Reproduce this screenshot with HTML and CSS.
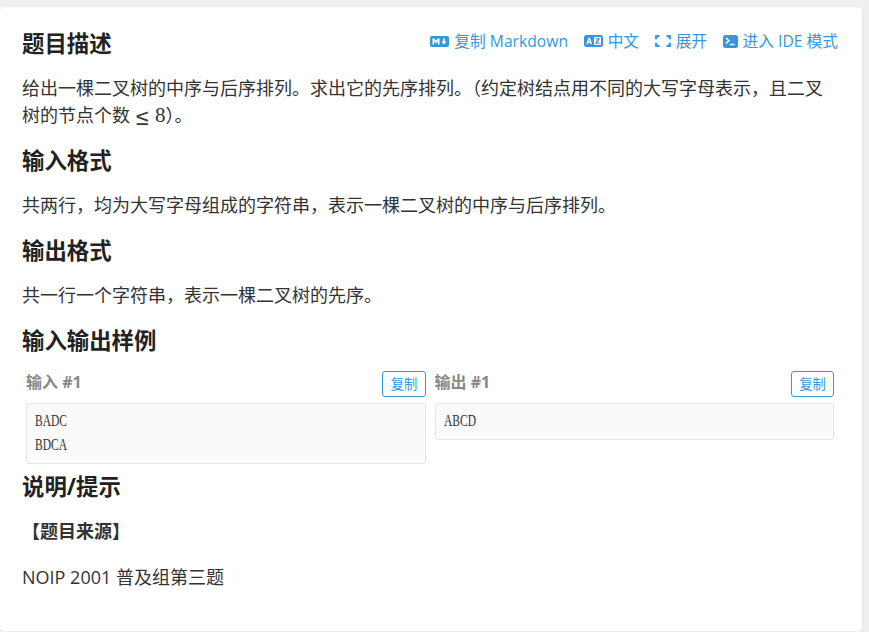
FILE: index.html
```html
<!DOCTYPE html>
<html lang="zh-CN">
<head>
  <meta charset="UTF-8" />
  <title>题目描述</title>
  <link rel="stylesheet" href="styles.css">
</head>
<body>

  <div class="card">
    <div class="card-head">
      <h2>题目描述</h2>
      <div class="tools">
        <a class="tool">
          <svg width="19" height="11" viewBox="0 0 19 11"><rect width="19" height="11" rx="2" fill="#3498db"/><path d="M2.500 8.500v-6h1.800L6 4.800l1.700-2.300h1.800v6H7.800V5.200L6 7.400 4.200 5.200v3.300z" fill="#fff"/><path d="M13 2.500h1.800v3H16.500l-2.600 3-2.600-3H13z" fill="#fff"/></svg>
          复制 Markdown
        </a>
        <a class="tool">
          <svg width="19" height="12" viewBox="0 0 19 12"><rect width="19" height="12" rx="2.500" fill="#3498db"/><path d="M2.300 9.300l2.200-6.600h1.400l2.200 6.600H6.700l-.4-1.300H4.100l-.4 1.300zM4.500 6.800h1.400l-.7-2.300z" fill="#fff"/><rect x="10" y="2" width="7" height="8" fill="#fff"/><path d="M11.300 3.200h4.400v1.100L13.200 7.700h2.500v1.100h-4.400V7.700l2.500-3.400h-2.500z" fill="#3498db"/></svg>
          中文
        </a>
        <a class="tool">
          <svg width="16" height="12" viewBox="0 0 16 12"><path d="M4.500 1.200H1.200v3M11.500 1.200h3.300v3M4.500 10.800H1.200v-3M11.500 10.800h3.300v-3" fill="none" stroke="#3498db" stroke-width="2.200"/></svg>
          展开
        </a>
        <a class="tool">
          <svg width="15" height="13" viewBox="0 0 15 13"><rect width="15" height="13" rx="2.500" fill="#3498db"/><path d="M3 3l3 2.700-3 2.700" fill="none" stroke="#fff" stroke-width="1.500"/><path d="M7 9.500h4.500" stroke="#fff" stroke-width="1.400"/></svg>
          进入 IDE 模式
        </a>
      </div>
    </div>
    <p>给出一棵二叉树的中序与后序排列。求出它的先序排列。（约定树结点用不同的大写字母表示，且二叉树的节点个数 <span class="math"><span class="leq">≤</span> 8</span>）。</p>

    <h2>输入格式</h2>
    <p>共两行，均为大写字母组成的字符串，表示一棵二叉树的中序与后序排列。</p>

    <h2>输出格式</h2>
    <p>共一行一个字符串，表示一棵二叉树的先序。</p>

    <h2>输入输出样例</h2>
    <div class="samples">
      <div class="sample">
        <div class="sample-head">
          <h3>输入 #1</h3>
          <a class="copy">复制</a>
        </div>
        <pre><code>BADC
BDCA</code></pre>
      </div>
      <div class="sample">
        <div class="sample-head">
          <h3>输出 #1</h3>
          <a class="copy">复制</a>
        </div>
        <pre><code>ABCD</code></pre>
      </div>
    </div>

    <h2 class="after-samples">说明/提示</h2>
    <p class="source"><strong>【题目来源】</strong></p>
    <p>NOIP 2001 普及组第三题</p>
  </div>

</body>
</html>
```

FILE: styles.css
```css
body {
  margin: 0;
  background: #efefef;
  font-family: "Open Sans", "Noto Sans CJK SC", sans-serif;
  font-size: 16px;
  color: #333;
  overflow: hidden;
}

.card {
  width: 862px;
  height: 624px;
  margin-top: 7px;
  padding: 21px 22px 0;
  box-sizing: border-box;
  background: #fff;
  border-radius: 4px;
  box-shadow: 0 1px 3px rgba(26, 26, 26, 0.1);
}

.card-head {
  display: flex;
  justify-content: space-between;
  align-items: flex-start;
  margin-bottom: 15px;
  padding-right: 2px;
}

h2 {
  margin: 0 0 15px;
  font-size: 22.4px;
  line-height: 32px;
  font-weight: 700;
  color: #222;
}

.card-head h2 {
  margin: 0;
}

h2.after-samples {
  margin-top: 7px;
}

p {
  margin: 0 0 16px;
  font-size: 18px;
  line-height: 27px;
}

p.source {
  margin-bottom: 19px;
}

.math {
  font-family: "Liberation Serif", serif;
  font-size: 21px;
}

.leq {
  display: inline-block;
  font-family: "DejaVu Serif", serif;
  font-size: 18px;
  line-height: 1;
  transform: translateY(1px) scaleY(1.3);
}

.tools {
  display: flex;
  gap: 15.6px;
  font-size: 15.7px;
  line-height: 26px;
  color: #3498db;
}

.tool {
  display: flex;
  align-items: center;
  gap: 5px;
}

.samples {
  display: flex;
  align-items: flex-start;
  gap: 9px;
  margin: -1px 6px 0 4px;
}

.sample {
  flex: 1;
}

.sample-head {
  display: flex;
  justify-content: space-between;
  align-items: flex-start;
  margin-bottom: 6px;
}

h3 {
  margin: 0;
  font-size: 16px;
  line-height: 22px;
  color: #888;
}

.copy {
  padding: 0 7.2px;
  font-size: 13.33px;
  line-height: 24px;
  color: #3498db;
  border: 1px solid #3498db;
  border-radius: 3px;
}

pre {
  margin: 0;
  padding: 5px 8px 6px;
  line-height: 24px;
  color: #333;
  background: #fafafa;
  border: 1px solid #e6e6e6;
  border-radius: 3px;
}

/* the original font is very narrow */
code {
  display: inline-block;
  font-family: "Liberation Serif", serif;
  font-size: 16px;
  transform: scaleX(0.72);
  transform-origin: left;
}
```
